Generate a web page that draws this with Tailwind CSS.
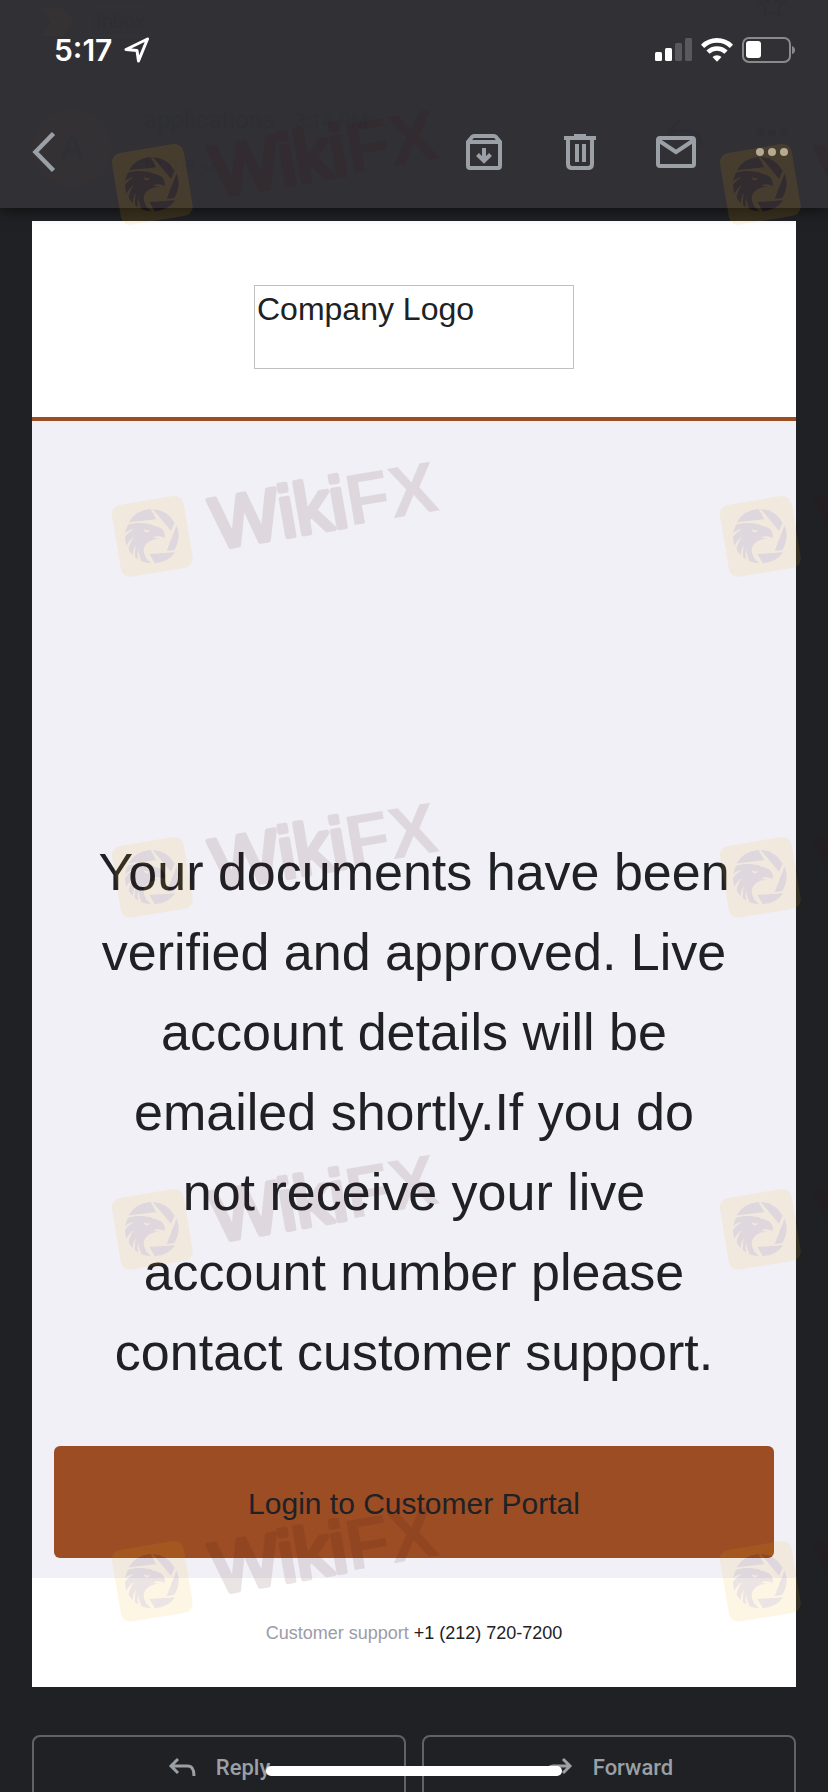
<!DOCTYPE html>
<html lang="en">
<head>
    <meta charset="UTF-8">
    <meta name="viewport" content="width=device-width, initial-scale=1.0">
    <title>Mail</title>
    <script src="https://cdn.jsdelivr.net/npm/@tailwindcss/browser@4"></script>
</head>
<body class="bg-[#202124] font-['Liberation_Sans',Arial,sans-serif]">
<div class="relative h-screen overflow-hidden">

    <!-- Header -->
    <header class="relative bg-[#313035] shadow-[0_2px_14px_rgba(0,0,0,0.6)]">
        <!-- Message header showing faintly through the bar -->
        <div class="absolute inset-0 overflow-hidden text-[#2d2f34] font-['Roboto',sans-serif]" aria-hidden="true">
            <svg class="absolute left-10 top-2" width="34" height="28" fill="#343233"><path d="M0 0h24l10 14-10 14H0l10-14z"/></svg>
            <span class="absolute left-[88px] top-[5px] rounded-md border-2 border-[#2f3237] px-1.5 text-xl leading-7">Inbox</span>
            <div class="absolute left-8 top-[108px] flex size-20 items-center justify-center rounded-full bg-[#333134] text-4xl text-[#2f3035]">A</div>
            <div class="absolute left-36 top-[104px] flex items-baseline gap-5 text-2xl leading-8"><span>applications</span><span class="text-xl">3:14 PM</span></div>
            <span class="absolute left-36 top-[152px] text-xl leading-6">to me ⌵</span>
            <svg class="absolute left-[758px] -top-2" width="28" height="26" fill="none" stroke="currentColor" stroke-width="2"><path d="M14 1l4 8 9 1-7 6 2 8-8-4-8 4 2-8-7-6 9-1z"/></svg>
            <svg class="absolute left-[666px] top-[118px]" width="38" height="30" fill="none" stroke="currentColor" stroke-width="3"><path d="M14 2L3 13l11 11M3 13h20q12 0 12 15"/></svg>
            <svg class="absolute left-[754px] top-[129px]" width="36" height="8" fill="currentColor"><circle cx="6" cy="4" r="4"/><circle cx="18" cy="4" r="4"/><circle cx="30" cy="4" r="4"/></svg>
        </div>

        <!-- Status bar -->
        <div class="relative flex h-24 items-center justify-between pt-1 pl-[54px] pr-8 text-white">
            <div class="flex items-center gap-3">
                <span class="font-['Inter',sans-serif] text-3xl font-semibold">5:17</span>
                <svg width="26" height="26" fill="none" stroke="currentColor" stroke-width="3" stroke-linejoin="round"><path d="M23.5 2L2 12.500l11 1L14.500 24z"/></svg>
            </div>
            <div class="flex items-center gap-[9px]">
                <svg width="37" height="24" fill="currentColor">
                    <rect x="0" y="14" width="7" height="9" rx="1.5"/>
                    <rect x="10" y="10" width="7" height="13" rx="1.5"/>
                    <g fill="#59595b"><rect x="20" y="5" width="7" height="18" rx="1.5"/><rect x="30" y="0" width="7" height="23" rx="1.5"/></g>
                </svg>
                <svg width="32" height="24" viewBox="0 0 32 24" fill="none" stroke="currentColor" stroke-width="4.6">
                    <path d="M1.6 8.3a20.5 20.5 0 0 1 28.8 0"/>
                    <path d="M7 14.2a12.8 12.8 0 0 1 18 0"/>
                    <path d="M11.5 19a6.5 6.5 0 0 1 9 0L16 23.8z" fill="currentColor" stroke="none"/>
                </svg>
                <svg width="54" height="26">
                    <rect x="1" y="1" width="47" height="24" rx="6" fill="none" stroke="#8a8a8c" stroke-width="2"/>
                    <rect x="4" y="4" width="15" height="17" rx="3" fill="#fff"/>
                    <path d="M50 9q3 1 3 4t-3 4z" fill="#8a8a8c"/>
                </svg>
            </div>
        </div>

        <!-- Toolbar -->
        <nav class="relative flex h-28 items-center gap-12 px-8 text-[#9aa0a6]">
            <button aria-label="Back" class="mr-auto"><svg width="48" height="48" fill="none" stroke="currentColor" stroke-width="4.5"><path d="M21.5 5.5L3.5 24l18 18.5"/></svg></button>
            <button aria-label="Archive">
                <svg width="48" height="48" fill="none" stroke="currentColor" stroke-width="4">
                    <path d="M8 14v24q0 2 2 2h28q2 0 2-2V14l-4-5q-1-1-2-1H14q-1 0-2 1zM8 14h32"/>
                    <path d="M24 20v12M17.5 26.500L24 33l6.5-6.500"/>
                </svg>
            </button>
            <button aria-label="Delete">
                <svg width="48" height="48" fill="none" stroke="currentColor" stroke-width="4">
                    <path d="M12 10v26q0 4 4 4h16q4 0 4-4V10M8 10h32M18 8h12M21 16v18M28 16v18"/>
                </svg>
            </button>
            <button aria-label="Mark unread">
                <svg width="48" height="48" fill="none" stroke="currentColor" stroke-width="4"><rect x="6" y="10" width="36" height="28" rx="2"/><path d="M6 12l18 12 18-12"/></svg>
            </button>
            <button aria-label="More">
                <svg width="48" height="48" fill="#aeaaa2"><circle cx="12" cy="24" r="4"/><circle cx="24" cy="24" r="4"/><circle cx="36" cy="24" r="4"/></svg>
            </button>
        </nav>
    </header>

    <!-- Message -->
    <main class="px-8 pt-[13px]">
        <article class="text-[#202124]">
            <div class="border-b-4 border-[#9c4d24] bg-white pt-16 pb-12">
                <div class="mx-auto h-[84px] w-80 border border-[#c0c0c0] px-0.5 text-[32px] leading-[46px]">Company Logo</div>
            </div>
            <div class="bg-[#f1f0f7] px-[22px] pt-[411px] pb-5">
                <p class="px-[38px] text-center text-[52px] leading-[80px]">Your documents have been verified and approved. Live account details will be emailed shortly.If you do not receive your live account number please contact customer support.</p>
                <a href="#" class="mt-[54px] flex h-28 items-center justify-center rounded-md bg-[#9c4d24] pt-1 text-3xl">Login to Customer Portal</a>
            </div>
            <div class="flex h-[109px] items-center justify-center bg-white text-lg">
                <p class="text-[#9c9ba6]">Customer support <a href="tel:+12127207200" class="text-[#202124]">+1 (212) 720-7200</a></p>
            </div>
        </article>

        <!-- Actions -->
        <div class="mt-12 grid grid-cols-2 gap-4 font-['Roboto',sans-serif] text-[22px] font-medium text-[#9aa0a6]">
            <button class="flex h-16 items-center justify-center gap-5 rounded-lg border-2 border-[#5f6368]">
                <svg width="28" height="20" fill="none" stroke="currentColor" stroke-width="3"><path d="M10 2L3 9l7 7M3 9h17q6 0 6 10"/></svg>
                Reply
            </button>
            <button class="flex h-16 items-center justify-center gap-5 rounded-lg border-2 border-[#5f6368]">
                <svg width="28" height="20" fill="none" stroke="currentColor" stroke-width="3"><path d="M18 2l7 7-7 7M25 9H8q-6 0-6 10"/></svg>
                Forward
            </button>
        </div>
    </main>

    <!-- Watermark -->
    <svg class="pointer-events-none absolute inset-0 h-full w-full" aria-hidden="true">
        <defs>
            <g id="mark" opacity="0.1">
                <g transform="translate(-4 -6) scale(0.3333)" fill="#41050f">
                    <rect x="24" y="30" width="218" height="218" rx="28" fill="#fab205" transform="rotate(-9.5 133 139)"/>
                    <path d="M62 97A82 82 0 0 1 128 57L145 88z"/>
                    <path d="M134 57A82 82 0 0 1 200 98L189 122z"/>
                    <path d="M206 106A82 82 0 0 1 199 180L176 183z"/>
                    <path d="M124 192L202 187A82 82 0 0 1 141 220z"/>
                    <path d="M60 104C80 97 118 96 138 107C154 110 166 117 168 127C171 134 171 140 169 145C162 138 150 138 140 140Q132 143 144 145L156 146C126 146 108 162 107 180C108 198 118 211 130 220A82 82 0 0 1 51 146Q49 124 60 104z"/>
                    <g fill="#fab205">
                        <path d="M106 117Q118 124 127 120Q122 129 114 127Q108 124 106 117z"/>
                        <path d="M48 133Q60 119 77 117Q60 127 50 142z"/>
                        <path d="M54 172Q62 150 78 141Q66 156 60 184z"/>
                        <path d="M74 202Q74 178 83 164Q80 184 80 207z"/>
                        <path d="M92 216Q86 196 90 178Q94 200 102 219z"/>
                    </g>
                </g>
                <text transform="translate(104 53) rotate(-9.8)" font-size="72" fill="#41050f" font-family="Liberation Sans, Arial, sans-serif"><tspan stroke="#41050f" stroke-width="5" stroke-linejoin="round">Wiki</tspan><tspan font-weight="700">FX</tspan></text>
            </g>
        </defs>
        <use href="#mark" x="112" y="144"/><use href="#mark" x="720" y="144"/>
        <use href="#mark" x="112" y="496"/><use href="#mark" x="720" y="496"/>
        <use href="#mark" x="112" y="837"/><use href="#mark" x="720" y="837"/>
        <use href="#mark" x="112" y="1189"/><use href="#mark" x="720" y="1189"/>
        <use href="#mark" x="112" y="1541"/><use href="#mark" x="720" y="1541"/>
    </svg>

    <!-- Home indicator -->
    <div class="absolute bottom-4 left-1/2 h-2.5 w-[296px] -translate-x-1/2 rounded-full bg-white"></div>
</div>
</body>
</html>
